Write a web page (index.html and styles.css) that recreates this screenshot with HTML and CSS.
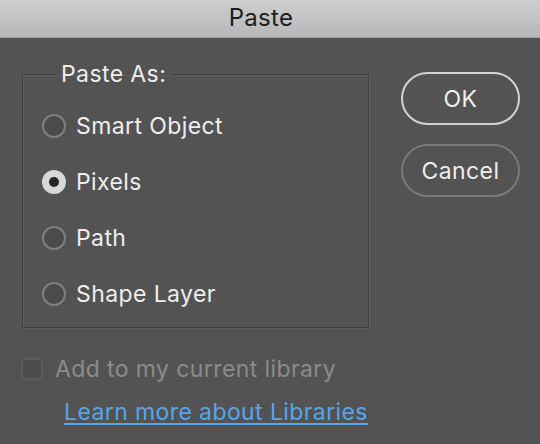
FILE: index.html
```html
<!DOCTYPE html>
<html>
<head>
<meta charset="utf-8">
<link rel="stylesheet" href="styles.css">
</head>
<body>
<div class="titlebar">Paste</div>
<div class="content">
  <div class="left">
    <fieldset class="group">
      <legend class="legend">Paste As:</legend>
      <div class="options">
        <div class="option"><span class="radio"></span><span class="label">Smart Object</span></div>
        <div class="option"><span class="radio selected"></span><span class="label">Pixels</span></div>
        <div class="option"><span class="radio"></span><span class="label">Path</span></div>
        <div class="option"><span class="radio"></span><span class="label">Shape Layer</span></div>
      </div>
    </fieldset>
    <div class="check-row"><span class="checkbox"></span><span class="check-label">Add to my current library</span></div>
    <a class="link" href="#">Learn more about Libraries</a>
  </div>
  <div class="buttons">
    <div class="btn primary">OK</div>
    <div class="btn">Cancel</div>
  </div>
</div>
</body>
</html>
```

FILE: styles.css
```css
html, body {
  margin: 0;
  padding: 0;
  background: #535353;
  font-family: Inter, "Liberation Sans", sans-serif;
  height: 100%;
  overflow: hidden;
}
.titlebar {
  height: 37px;
  line-height: 35px;
  text-align: center;
  padding-right: 18px;
  font-size: 24px;
  letter-spacing: 0.3px;
  color: #1c1c1c;
  background: linear-gradient(#cfcdcf, #b8b6b8);
  border-bottom: 1px solid #9c9c9c;
}
.content {
  display: flex;
  padding: 23px 0 0 22px;
}
.left {
  width: 347px;
  display: flex;
  flex-direction: column;
  font-size: 23px;
  letter-spacing: 0.4px;
  white-space: nowrap;
}
.group {
  margin: 0;
  padding: 0 0 5px 0;
  border: 1px solid #3e3e3e;
  box-shadow: 1px 1px 0 #5e5e5e, inset 1px 1px 0 #5e5e5e;
  height: 267px;
  box-sizing: border-box;
}
.legend {
  margin-left: 33px;
  padding: 0 5px;
  line-height: 26px;
  color: #eeeeee;
}
.options {
  display: flex;
  flex-direction: column;
  padding-top: 11px;
}
.option {
  height: 56px;
  display: flex;
  align-items: center;
  padding-left: 19px;
}
.radio {
  width: 24px;
  height: 24px;
  box-sizing: border-box;
  border-radius: 50%;
  border: 2px solid #7f7f7f;
  background: #4b4b4b;
  display: flex;
  align-items: center;
  justify-content: center;
}
.radio.selected {
  border: none;
  background: #d8d8d8;
}
.radio.selected::after {
  content: "";
  width: 10px;
  height: 10px;
  border-radius: 50%;
  background: #262626;
}
.label {
  margin-left: 10px;
  color: #eeeeee;
}
.check-row {
  display: flex;
  align-items: center;
  margin-top: 27px;
  margin-left: -1px;
}
.checkbox {
  width: 22px;
  height: 22px;
  box-sizing: border-box;
  border: 2px solid #5c5c5c;
  background: #4d4d4d;
  border-radius: 4px;
}
.check-label {
  margin-left: 12px;
  color: #8b8b8b;
}
.link {
  align-self: flex-start;
  margin-top: 15px;
  margin-left: 42px;
  color: #58a5ea;
  text-decoration: underline;
  text-underline-offset: 3px;
}
.buttons {
  margin-left: 32px;
  margin-top: 11px;
  display: flex;
  flex-direction: column;
  gap: 19px;
}
.btn {
  width: 119px;
  height: 53px;
  box-sizing: border-box;
  border: 2px solid #7a7a7a;
  border-radius: 27px;
  display: flex;
  align-items: center;
  justify-content: center;
  font-size: 23px;
  letter-spacing: 0.4px;
  color: #eeeeee;
}
.btn.primary {
  border-color: #d2d2d2;
}
```
